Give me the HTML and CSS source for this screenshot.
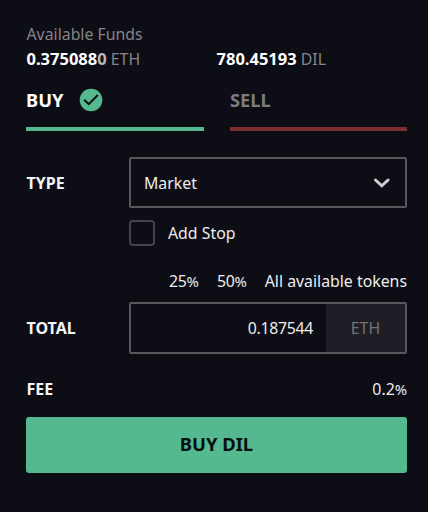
FILE: index.html
```
<!DOCTYPE html>
<html lang="en">
<head>
    <meta charset="UTF-8">
    <meta name="viewport" content="width=device-width, initial-scale=1.0">
    <title>Buy DIL</title>
    <link rel="stylesheet" href="styles.css">
</head>
<body>

    <div class="container">
        <div class="funds-title"><span class="funds-text">Available Funds</span></div>
        <div class="funds">
            <div class="fund"><b>0.375088<span class="dim">0</span></b> <span class="unit">ETH</span></div>
            <div class="fund"><b>780.45193</b> <span class="unit">DIL</span></div>
        </div>

        <div class="tabs">
            <div class="tab active">
                <span class="tab-name">BUY</span>
                <svg class="check" width="24" height="24" viewBox="0 0 24 24">
                    <circle cx="12" cy="12" r="11.3" fill="#55b98f"/>
                    <path d="M5.2 11.7L9.7 16.1L18.8 7" fill="none" stroke="#0d0d16" stroke-width="2"/>
                </svg>
            </div>
            <div class="tab sell"><span class="tab-name">SELL</span></div>
        </div>

        <div class="row type-row">
            <span class="label">TYPE</span>
            <div class="select">
                <span class="value">Market</span>
                <svg width="18" height="12" viewBox="0 0 18 12">
                    <path d="M2.5 3L8.8 8.8L15.1 3" fill="none" stroke="#cfcfcf" stroke-width="3" stroke-linecap="round"/>
                </svg>
            </div>
        </div>

        <div class="stop">
            <span class="checkbox"></span>
            <span class="stop-text">Add Stop</span>
        </div>

        <div class="amounts">
            <span><span class="digits">25</span><span class="pct">%</span></span>
            <span><span class="digits">50</span><span class="pct">%</span></span>
            <span class="all">All available tokens</span>
        </div>

        <div class="row total-row">
            <span class="label total">TOTAL</span>
            <div class="input">
                <span class="number">0.187544</span>
                <span class="suffix">ETH</span>
            </div>
        </div>

        <div class="fee">
            <span class="label fee-label">FEE</span>
            <span class="fee-value">0.2<span class="pct">%</span></span>
        </div>

        <button class="btn">BUY DIL</button>
    </div>

</body>
</html>
```
FILE: styles.css
```
* { box-sizing: border-box; }
body {
    margin: 0;
    height: 512px;
    overflow: hidden;
    background: #0d0d16;
    color: #ececec;
    font-family: "Noto Sans", sans-serif;
    font-size: 15.85px;
    white-space: nowrap;
}
.container { padding: 22px 21px 0 26px; }

/* Funds */
.funds-title { height: 24px; line-height: 24px; padding-left: 0.5px; color: #858588; }
.funds { display: grid; grid-template-columns: 190px 1fr; height: 25px; line-height: 26px; }
.fund { padding-left: 0.5px; }
.fund b { color: #fff; font-size: 16.5px; }
.fund .dim { color: #b9b9bc; }
.unit { color: #858588; }

/* Buy / sell tabs */
.tabs { display: grid; grid-template-columns: 178px 177px; gap: 26px; height: 60px; }
.tab { display: flex; align-items: center; height: 60px; padding-top: 2px; font-size: 18.3px; font-weight: bold; color: #7c7c80; border-bottom: 4px solid #7b2f31; }
.tab.active { color: #fff; border-bottom-color: #55b98f; }
.tab-name { margin-bottom: 2px; }
.check { margin-left: 16px; }

/* Form rows */
.row { display: grid; grid-template-columns: 103px 1fr; align-items: center; }
.label { padding-left: 0.5px; font-size: 16px; font-weight: bold; color: #f4f4f4; }
.type-row { margin-top: 26px; }
.select { display: flex; align-items: center; justify-content: space-between; height: 51px; padding: 0 14px 0 13px; border: 2px solid #58585b; border-radius: 2px; }
.stop { display: flex; align-items: center; gap: 13px; margin: 12px 0 0 103px; height: 26px; }
.checkbox { width: 26px; height: 26px; border: 2px solid #434347; border-radius: 4px; }
.amounts { display: flex; justify-content: flex-end; align-items: center; gap: 18px; height: 24px; margin-top: 23px; }
.digits { letter-spacing: -0.3px; }
.pct { font-size: 14.8px; }
.total-row { margin-top: 9px; }
.input { display: flex; height: 52px; border: 2px solid #58585b; border-radius: 2px; }
.number { flex: 1; padding-right: 13px; line-height: 48px; text-align: right; letter-spacing: -0.3px; }
.suffix { width: 79px; line-height: 48px; text-align: center; background: #1e1e26; color: #737377; }
.fee { display: flex; justify-content: space-between; align-items: center; height: 24px; margin-top: 23px; }

.btn { display: block; width: 100%; height: 56px; margin-top: 16px; padding: 0 0 3px; border: none; border-radius: 3px; background: #55b98f; color: #06100e; font: bold 18.4px "Noto Sans", sans-serif; }
```
